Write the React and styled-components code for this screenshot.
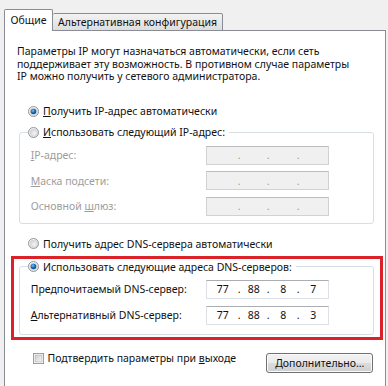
import React from "react";
import styled, { createGlobalStyle } from "styled-components";

const BORDER = "#898c95";
const GROUP_BORDER = "#d5dfe5";
const DISABLED_TEXT = "#9d9d9d";

const GlobalStyle = createGlobalStyle`
  html, body {
    margin: 0;
    padding: 0;
  }
  body {
    width: 388px;
    height: 386px;
    overflow: hidden;
    background: #f0f0f0;
    font-family: "Noto Sans", "Liberation Sans", sans-serif;
    font-size: 10.5px;
    color: #111;
  }
`;

const Dialog = styled.div`
  padding: 9px 2px 0 4px;
`;

const TabStrip = styled.div`
  display: flex;
  align-items: flex-end;
  height: 22px;
  position: relative;
  z-index: 1;
  margin-bottom: -1px;
`;

const Tab = styled.div`
  box-sizing: border-box;
  height: ${(p) => (p.active ? "22px" : "18px")};
  width: ${(p) => p.width}px;
  display: flex;
  align-items: center;
  justify-content: center;
  padding-bottom: ${(p) => (p.active ? "2px" : "1px")};
  border: 1px solid ${BORDER};
  border-bottom: ${(p) => (p.active ? "none" : `1px solid ${BORDER}`)};
  border-left: ${(p) => (p.first ? `1px solid ${BORDER}` : "none")};
  border-radius: 2px 2px 0 0;
  background: ${(p) =>
    p.active ? "#fff" : "linear-gradient(#f3f3f3, #e6e6e6 60%, #dedede)"};
  white-space: nowrap;
`;

const Panel = styled.div`
  box-sizing: border-box;
  height: 370px;
  background: #fff;
  border: 1px solid ${BORDER};
  padding: 0 2px 0 6px;
`;

const Intro = styled.p`
  margin: 14px 0 0 6px;
  line-height: 12.5px;
`;

const Key = styled.span`
  text-decoration: underline;
  text-underline-offset: 1px;
`;

const OptionRow = styled.label`
  display: flex;
  align-items: center;
  gap: 4.5px;
  height: 14px;
  margin: ${(p) => p.margin || "0"};
  white-space: nowrap;
`;

const GroupBox = styled.fieldset`
  margin: ${(p) => p.margin || "0"};
  padding: 0 44.3px ${(p) => p.bottom}px 7.5px;
  border: 1px solid ${GROUP_BORDER};
  border-radius: 3px;
  min-width: 0;
`;

const Legend = styled.legend`
  padding: 0 4px 0 0;
  margin: 0;
`;

const FieldRow = styled.div`
  display: flex;
  align-items: center;
  justify-content: space-between;
  height: 19px;
  margin: ${(p) => p.top}px 0 0 3.2px;
  color: ${(p) => (p.disabled ? DISABLED_TEXT : "#111")};
  white-space: nowrap;
`;

const IpBox = styled.div`
  box-sizing: border-box;
  width: 123px;
  height: 19px;
  padding: 0 1px;
  display: grid;
  grid-template-columns: 30px 3px 26px 3px 27px 3px 27px;
  align-items: center;
  text-align: center;
  background: ${(p) => (p.disabled ? "#f0f0f0" : "#fff")};
  border: 1px solid ${(p) => (p.disabled ? "#d2d2d2" : "#dde1e6")};
  border-top-color: ${(p) => (p.disabled ? "#bcbcbc" : "#abadb3")};
  color: ${(p) => (p.disabled ? DISABLED_TEXT : "#111")};
`;

const Highlight = styled.div`
  box-sizing: border-box;
  width: 372px;
  margin-top: 5px;
  padding: 1px 6px 2.5px 5px;
  border: 3px solid #dc2229;
`;

const Footer = styled.div`
  display: flex;
  justify-content: space-between;
  align-items: flex-start;
  margin: 11px 9.7px 0 22px;
`;

const CheckRow = styled.label`
  display: flex;
  align-items: center;
  gap: 3.5px;
  height: 14px;
  white-space: nowrap;
`;

const Button = styled.button`
  box-sizing: border-box;
  width: 107px;
  height: 20px;
  margin-top: 1.7px;
  padding: 0 0 1px;
  font: inherit;
  color: #111;
  white-space: nowrap;
  border: 1px solid #707070;
  border-radius: 3px;
  background: linear-gradient(#f2f2f2 0%, #ebebeb 50%, #dddddd 50%, #cfcfcf 100%);
  box-shadow: inset 0 0 0 1px #fbfbfb;
`;

const Radio = ({ checked }) => (
  <svg width="11" height="11" viewBox="0 0 13 13">
    <defs>
      <linearGradient id="radioOuter" x1="0" y1="0" x2="1" y2="1">
        <stop offset="0" stopColor="#f4f4f4" />
        <stop offset="1" stopColor="#d2d2d2" />
      </linearGradient>
      <radialGradient id="radioInner" cx="0.6" cy="0.6" r="0.7">
        <stop offset="0" stopColor="#f6f6f6" />
        <stop offset="1" stopColor="#cbcbcb" />
      </radialGradient>
      <radialGradient id="radioDot" cx="0.4" cy="0.35" r="0.7">
        <stop offset="0" stopColor="#7cc4f4" />
        <stop offset="0.5" stopColor="#1a6fc0" />
        <stop offset="1" stopColor="#0a3f80" />
      </radialGradient>
    </defs>
    <circle cx="6.5" cy="6.5" r="6" fill="url(#radioOuter)" stroke="#8a8d93" />
    <circle cx="6.5" cy="6.5" r="4.2" fill="url(#radioInner)" />
    {checked && <circle cx="6.5" cy="6.5" r="3.3" fill="url(#radioDot)" />}
  </svg>
);

const Checkbox = () => (
  <svg width="11" height="11" viewBox="0 0 13 13">
    <defs>
      <linearGradient id="checkInner" x1="0" y1="0" x2="1" y2="1">
        <stop offset="0" stopColor="#cbcbcb" />
        <stop offset="1" stopColor="#f7f7f7" />
      </linearGradient>
    </defs>
    <rect x="0.5" y="0.5" width="12" height="12" fill="#f4f4f4" stroke="#8e8f8f" />
    <rect x="2.5" y="2.5" width="8" height="8" fill="url(#checkInner)" stroke="#aeb1b5" strokeWidth="0.6" />
  </svg>
);

const IpField = ({ value, disabled }) => {
  const parts = value ? value.split(".") : ["", "", "", ""];
  return (
    <IpBox disabled={disabled}>
      {parts.map((part, i) => (
        <React.Fragment key={i}>
          {i > 0 && <span>.</span>}
          <span>{part}</span>
        </React.Fragment>
      ))}
    </IpBox>
  );
};

const App = () => (
  <>
    <GlobalStyle />
    <Dialog>
      <TabStrip>
        <Tab active first width={49}>Общие</Tab>
        <Tab width={170}>Альтернативная конфигурация</Tab>
      </TabStrip>
      <Panel>
        <Intro>
          Параметры IP могут назначаться автоматически, если сеть
          <br />
          поддерживает эту возможность. В противном случае параметры
          <br />
          IP можно получить у сетевого администратора.
        </Intro>

        <OptionRow margin="21.5px 0 0 16.5px">
          <Radio checked />
          <span>
            <Key>П</Key>олучить IP-адрес автоматически
          </span>
        </OptionRow>

        <GroupBox margin="7px 9px 0 8px" bottom={7.5}>
          <Legend>
            <OptionRow>
              <Radio />
              <span>
                <Key>И</Key>спользовать следующий IP-адрес:
              </span>
            </OptionRow>
          </Legend>
          <FieldRow top={6.7} disabled>
            <span>
              <Key>I</Key>P-адрес:
            </span>
            <IpField disabled />
          </FieldRow>
          <FieldRow top={6.5} disabled>
            <span>
              <Key>М</Key>аска подсети:
            </span>
            <IpField disabled />
          </FieldRow>
          <FieldRow top={6.5} disabled>
            <span>
              Основной <Key>ш</Key>люз:
            </span>
            <IpField disabled />
          </FieldRow>
        </GroupBox>

        <OptionRow margin="12.5px 0 0 16.5px">
          <Radio />
          <span>Получить адрес DNS-сервера автоматически</span>
        </OptionRow>

        <Highlight>
          <GroupBox margin="0" bottom={9}>
            <Legend>
              <OptionRow>
                <Radio checked />
                <span>Использовать следующие адреса DNS-серверов:</span>
              </OptionRow>
            </Legend>
            <FieldRow top={6.3}>
              <span>Предпочитаемый DNS-сервер:</span>
              <IpField value="77.88.8.7" />
            </FieldRow>
            <FieldRow top={7}>
              <span>
                <Key>А</Key>льтернативный DNS-сервер:
              </span>
              <IpField value="77.88.8.3" />
            </FieldRow>
          </GroupBox>
        </Highlight>

        <Footer>
          <CheckRow>
            <Checkbox />
            <span>
              Подтвердить параметры при <Key>в</Key>ыходе
            </span>
          </CheckRow>
          <Button>
            <Key>Д</Key>ополнительно...
          </Button>
        </Footer>
      </Panel>
    </Dialog>
  </>
);

export default App;
